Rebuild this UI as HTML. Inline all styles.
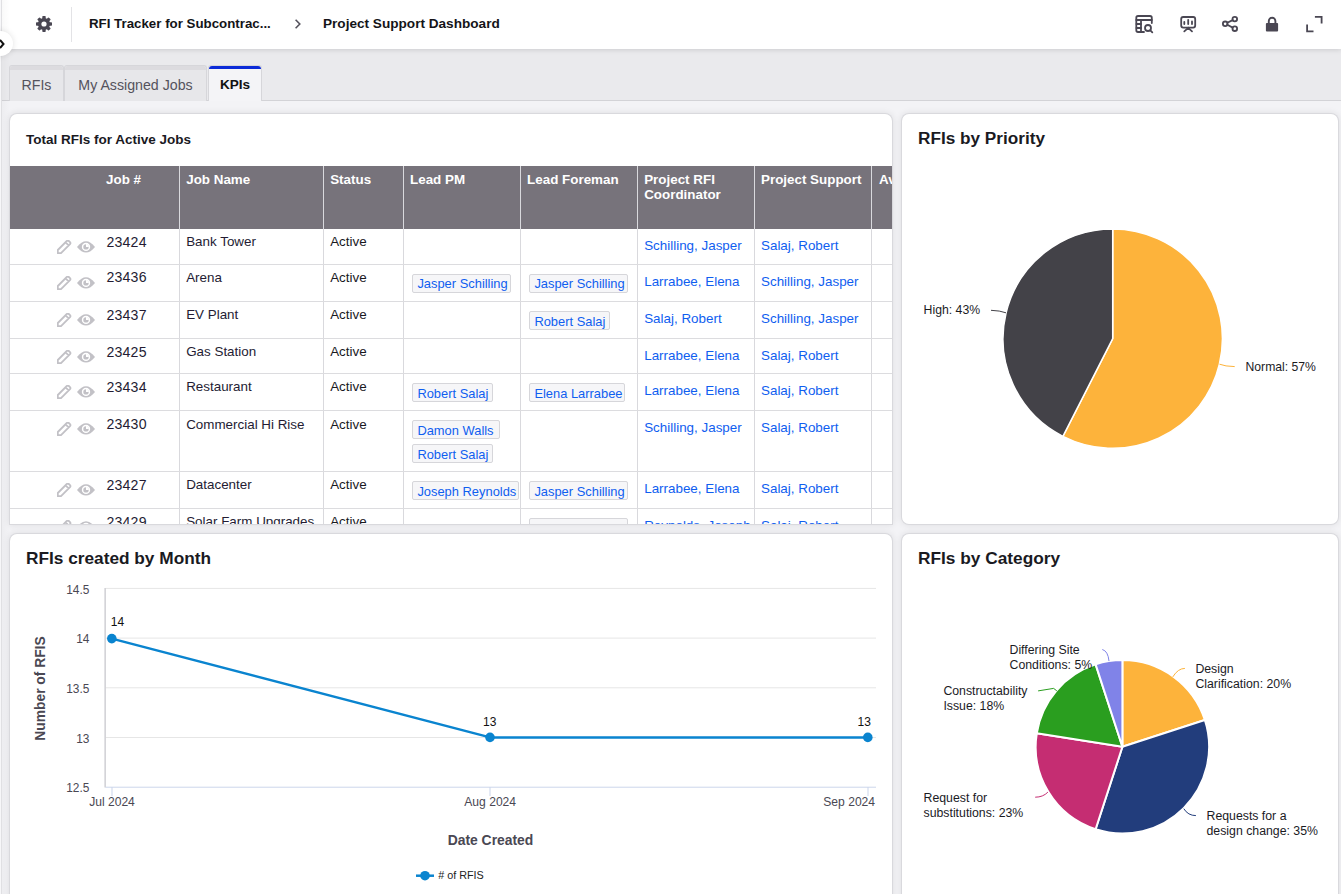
<!DOCTYPE html>
<html><head><meta charset="utf-8">
<style>
*{box-sizing:border-box;margin:0;padding:0}
html,body{width:1341px;height:894px;overflow:hidden;background:#e9e9ec;font-family:"Liberation Sans",sans-serif;position:relative}
.abs{position:absolute}
.t{position:absolute;white-space:nowrap}
#hdr{left:0;top:0;width:1341px;height:49px;background:#fff;box-shadow:0 1px 5px rgba(0,0,0,.13);z-index:5}
#leftline{left:0;top:0;width:10px;height:894px;z-index:6;background:linear-gradient(to right,#f7f7f9 0,#f7f7f9 1px,#e0e0e3 1px,#e0e0e3 2px,rgba(0,0,0,.025) 2px,rgba(0,0,0,0) 10px)}
.tabbar{left:0;top:49px;width:1341px;height:52px;background:#eaeaed;border-bottom:1px solid #d3d3d7}
.content{left:0;top:101px;width:1341px;height:793px;background:#f3f3f6}
.strip{display:none}
.tab{top:65px;height:36px;background:#e7e7ea;border:1px solid #d6d6da;border-bottom:none;border-radius:3px 3px 0 0;color:#55535d;font-size:14.2px;text-align:center;line-height:38px;z-index:2}
.tab:before{content:"";position:absolute;left:0;right:0;top:0;height:3.5px;background:#dcdbdf;border-radius:3px 3px 0 0}
.tab.sel{background:#f4f4f7;color:#111;height:36px;font-weight:bold;font-size:13.6px}
.tab.sel:before{background:#0b2ad8;height:3px}
.card{position:absolute;background:#fff;border-radius:7px;box-shadow:0 0 0 1px #d9d9dd,0 0 7px 1px rgba(0,0,0,.09);overflow:hidden}
.badge{position:absolute;height:19px;border:1px solid #d6d6da;background:#f6f6f8;border-radius:2px}
</style></head><body>
<div id="leftline" class="abs"></div>
<div id="hdr" class="abs">
<svg class="abs" style="left:0;top:0" width="1341" height="49" viewBox="0 0 1341 49">
<g transform="translate(44,24)" fill="#4a4753"><circle r="6.1"/><rect x="-1.7" y="-8" width="3.4" height="4" rx="0.7" transform="rotate(0)"/><rect x="-1.7" y="-8" width="3.4" height="4" rx="0.7" transform="rotate(45)"/><rect x="-1.7" y="-8" width="3.4" height="4" rx="0.7" transform="rotate(90)"/><rect x="-1.7" y="-8" width="3.4" height="4" rx="0.7" transform="rotate(135)"/><rect x="-1.7" y="-8" width="3.4" height="4" rx="0.7" transform="rotate(180)"/><rect x="-1.7" y="-8" width="3.4" height="4" rx="0.7" transform="rotate(225)"/><rect x="-1.7" y="-8" width="3.4" height="4" rx="0.7" transform="rotate(270)"/><rect x="-1.7" y="-8" width="3.4" height="4" rx="0.7" transform="rotate(315)"/><circle r="2.6" fill="#fff"/></g>
<rect x="71" y="7" width="1" height="35" fill="#e3e3e6"/>
<path d="M295.6,19.8 L299.8,24 L295.6,28.2" fill="none" stroke="#55535d" stroke-width="1.6"/>
<g fill="none" stroke="#4a4753" stroke-width="1.8" stroke-linecap="round" stroke-linejoin="round">
<!-- table search -->
<path d="M1144,32 H1138 Q1136.3,32 1136.3,30.3 V17.7 Q1136.3,16 1138,16 H1150 Q1151.8,16 1151.8,17.7 V23"/>
<path d="M1136.3,20 H1151.8"/>
<path d="M1141,20 V32"/>
<path d="M1136.5,24 H1141 M1136.5,28 H1141"/>
<circle cx="1148" cy="28" r="3"/>
<path d="M1150.3,30.3 L1152.3,32.3"/>
<!-- presentation -->
<rect x="1181.2" y="17" width="14" height="10.6" rx="2"/>
<path d="M1184.3,21.8 V24 M1188.2,19.8 V24 M1192,21.4 V24"/>
<path d="M1188.2,27.8 L1184.3,31.3 M1188.2,27.8 L1192,31.3"/>
<!-- share -->
<circle cx="1225.2" cy="23.8" r="2.3"/>
<circle cx="1234.8" cy="19.1" r="2.3"/>
<circle cx="1234.8" cy="28.7" r="2.3"/>
<path d="M1227.3,22.8 L1232.7,20.1 M1227.3,24.8 L1232.7,27.6"/>
<!-- expand -->
<path d="M1315.8,16.8 H1321.6 V22.6" stroke-linecap="square" stroke-linejoin="miter"/>
<path d="M1307.1,25.4 V31.3 H1312.6" stroke-linecap="square" stroke-linejoin="miter"/>
</g>
<!-- lock -->
<path d="M1268.8,23.5 V21 A3.3,3.3 0 0 1 1275.4,21 V23.5" fill="none" stroke="#4a4753" stroke-width="1.9"/>
<rect x="1265.9" y="23" width="12.2" height="8.6" rx="1" fill="#4a4753"/>
</svg>
<div class="abs" style="left:89px;top:16px;font-size:13.3px;font-weight:bold;color:#141418;white-space:nowrap">RFI Tracker for Subcontrac...</div>
<div class="abs" style="left:323px;top:16px;font-size:13.6px;font-weight:bold;color:#141418;white-space:nowrap">Project Support Dashboard</div>
</div>
<div class="abs" style="left:-12.5px;top:31px;width:25px;height:25px;border-radius:50%;background:#fff;box-shadow:0 0 6px rgba(0,0,0,.12);z-index:7"></div>
<svg class="abs" style="left:0;top:38px;z-index:8" width="8" height="12"><path d="M0,2 L3.5,6 L0,10" fill="none" stroke="#111" stroke-width="2"/></svg>
<div class="tabbar abs"></div>
<div class="content abs"></div>
<div class="strip abs"></div>
<div class="tab abs" style="left:9px;width:55px">RFIs</div>
<div class="tab abs" style="left:64px;width:143px">My Assigned Jobs</div>
<div class="tab abs sel" style="left:208px;width:54px">KPIs</div>
<div class="card" id="c1" style="left:10px;top:114px;width:882px;height:410px;border-radius:7px 7px 0 0">
<div class="t" style="left:16.00px;top:17.32px;font-size:13.5px;line-height:17px;font-weight:bold;color:#1a1a1f;">Total RFIs for Active Jobs</div>
<div class="abs" style="left:0;top:52px;width:882px;height:63.0px;background:#77737b"></div>
<div class="abs" style="left:169.1px;top:52px;width:1px;height:358px;background:#d9d9dd"></div>
<div class="abs" style="left:312.8px;top:52px;width:1px;height:358px;background:#d9d9dd"></div>
<div class="abs" style="left:393.1px;top:52px;width:1px;height:358px;background:#d9d9dd"></div>
<div class="abs" style="left:509.9px;top:52px;width:1px;height:358px;background:#d9d9dd"></div>
<div class="abs" style="left:626.9px;top:52px;width:1px;height:358px;background:#d9d9dd"></div>
<div class="abs" style="left:743.9px;top:52px;width:1px;height:358px;background:#d9d9dd"></div>
<div class="abs" style="left:861.1px;top:52px;width:1px;height:358px;background:#d9d9dd"></div>
<div class="abs" style="left:0;top:149.7px;width:882px;height:1px;background:#dcdcdf"></div>
<div class="abs" style="left:0;top:186.9px;width:882px;height:1px;background:#dcdcdf"></div>
<div class="abs" style="left:0;top:224.0px;width:882px;height:1px;background:#dcdcdf"></div>
<div class="abs" style="left:0;top:259.0px;width:882px;height:1px;background:#dcdcdf"></div>
<div class="abs" style="left:0;top:296.1px;width:882px;height:1px;background:#dcdcdf"></div>
<div class="abs" style="left:0;top:357.0px;width:882px;height:1px;background:#dcdcdf"></div>
<div class="abs" style="left:0;top:393.8px;width:882px;height:1px;background:#dcdcdf"></div>
<div class="t" style="left:96.00px;top:57.06px;font-size:13.4px;line-height:17px;font-weight:bold;color:#fff;">Job #</div>
<div class="t" style="left:176.20px;top:57.06px;font-size:13.4px;line-height:17px;font-weight:bold;color:#fff;">Job Name</div>
<div class="t" style="left:320.20px;top:57.06px;font-size:13.4px;line-height:17px;font-weight:bold;color:#fff;">Status</div>
<div class="t" style="left:400.00px;top:57.06px;font-size:13.4px;line-height:17px;font-weight:bold;color:#fff;">Lead PM</div>
<div class="t" style="left:517.10px;top:57.06px;font-size:13.4px;line-height:17px;font-weight:bold;color:#fff;">Lead Foreman</div>
<div class="t" style="left:634.20px;top:57.06px;font-size:13.4px;line-height:17px;font-weight:bold;color:#fff;">Project RFI</div>
<div class="t" style="left:751.00px;top:57.06px;font-size:13.4px;line-height:17px;font-weight:bold;color:#fff;">Project Support</div>
<div class="t" style="left:869.00px;top:57.06px;font-size:13.4px;line-height:17px;font-weight:bold;color:#fff;">Av</div>
<div class="t" style="left:634.20px;top:71.76px;font-size:13.4px;line-height:17px;font-weight:bold;color:#fff;">Coordinator</div>
<svg class="abs" style="left:47px;top:125.8px" width="15" height="15"><path d="M0.8,10 L9.8,1 Q10.8,0 11.8,1 L13,2.2 Q14,3.2 13,4.2 L4,13.2 L0.8,13.2 Z M8.6,2.4 L11.6,5.4" fill="none" stroke="#c2c1c6" stroke-width="1.8" stroke-linejoin="round"/></svg>
<svg class="abs" style="left:67px;top:127.0px" width="18" height="13"><path d="M0,5.9 Q9,-5.3 18,5.9 Q9,17.1 0,5.9Z" fill="#c2c1c6"/><circle cx="9" cy="5.9" r="4.2" fill="#fff"/><circle cx="9" cy="5.9" r="2.7" fill="#c2c1c6"/><path d="M9,5.9 L9,3.1 A2.8,2.8 0 0 1 11.8,5.9Z" fill="#fff"/></svg>
<div class="t" style="left:96.50px;top:118.71px;font-size:14.1px;line-height:18px;font-weight:normal;color:#241c33;;letter-spacing:0.2px">23424</div>
<div class="t" style="left:176.20px;top:119.46px;font-size:13.4px;line-height:17px;font-weight:normal;color:#241c33;">Bank Tower</div>
<div class="t" style="left:320.20px;top:119.46px;font-size:13.4px;line-height:17px;font-weight:normal;color:#1a1a1f;">Active</div>
<div class="t" style="left:634.20px;top:122.96px;font-size:13.4px;line-height:17px;font-weight:normal;color:#0f5ef0;">Schilling, Jasper</div>
<div class="t" style="left:751.00px;top:122.96px;font-size:13.4px;line-height:17px;font-weight:normal;color:#0f5ef0;">Salaj, Robert</div>
<svg class="abs" style="left:47px;top:161.5px" width="15" height="15"><path d="M0.8,10 L9.8,1 Q10.8,0 11.8,1 L13,2.2 Q14,3.2 13,4.2 L4,13.2 L0.8,13.2 Z M8.6,2.4 L11.6,5.4" fill="none" stroke="#c2c1c6" stroke-width="1.8" stroke-linejoin="round"/></svg>
<svg class="abs" style="left:67px;top:162.7px" width="18" height="13"><path d="M0,5.9 Q9,-5.3 18,5.9 Q9,17.1 0,5.9Z" fill="#c2c1c6"/><circle cx="9" cy="5.9" r="4.2" fill="#fff"/><circle cx="9" cy="5.9" r="2.7" fill="#c2c1c6"/><path d="M9,5.9 L9,3.1 A2.8,2.8 0 0 1 11.8,5.9Z" fill="#fff"/></svg>
<div class="t" style="left:96.50px;top:154.41px;font-size:14.1px;line-height:18px;font-weight:normal;color:#241c33;;letter-spacing:0.2px">23436</div>
<div class="t" style="left:176.20px;top:155.16px;font-size:13.4px;line-height:17px;font-weight:normal;color:#241c33;">Arena</div>
<div class="t" style="left:320.20px;top:155.16px;font-size:13.4px;line-height:17px;font-weight:normal;color:#1a1a1f;">Active</div>
<div class="badge" style="left:402.2px;top:159.6px;width:99px"></div>
<div class="t" style="left:407.40px;top:162.43px;font-size:12.9px;line-height:16px;font-weight:normal;color:#0f5ef0;">Jasper Schilling</div>
<div class="badge" style="left:519.2px;top:159.6px;width:99px"></div>
<div class="t" style="left:524.40px;top:162.43px;font-size:12.9px;line-height:16px;font-weight:normal;color:#0f5ef0;">Jasper Schilling</div>
<div class="t" style="left:634.20px;top:158.66px;font-size:13.4px;line-height:17px;font-weight:normal;color:#0f5ef0;">Larrabee, Elena</div>
<div class="t" style="left:751.00px;top:158.66px;font-size:13.4px;line-height:17px;font-weight:normal;color:#0f5ef0;">Schilling, Jasper</div>
<svg class="abs" style="left:47px;top:198.7px" width="15" height="15"><path d="M0.8,10 L9.8,1 Q10.8,0 11.8,1 L13,2.2 Q14,3.2 13,4.2 L4,13.2 L0.8,13.2 Z M8.6,2.4 L11.6,5.4" fill="none" stroke="#c2c1c6" stroke-width="1.8" stroke-linejoin="round"/></svg>
<svg class="abs" style="left:67px;top:199.9px" width="18" height="13"><path d="M0,5.9 Q9,-5.3 18,5.9 Q9,17.1 0,5.9Z" fill="#c2c1c6"/><circle cx="9" cy="5.9" r="4.2" fill="#fff"/><circle cx="9" cy="5.9" r="2.7" fill="#c2c1c6"/><path d="M9,5.9 L9,3.1 A2.8,2.8 0 0 1 11.8,5.9Z" fill="#fff"/></svg>
<div class="t" style="left:96.50px;top:191.61px;font-size:14.1px;line-height:18px;font-weight:normal;color:#241c33;;letter-spacing:0.2px">23437</div>
<div class="t" style="left:176.20px;top:192.36px;font-size:13.4px;line-height:17px;font-weight:normal;color:#241c33;">EV Plant</div>
<div class="t" style="left:320.20px;top:192.36px;font-size:13.4px;line-height:17px;font-weight:normal;color:#1a1a1f;">Active</div>
<div class="badge" style="left:519.2px;top:196.8px;width:80.5px"></div>
<div class="t" style="left:524.40px;top:199.63px;font-size:12.9px;line-height:16px;font-weight:normal;color:#0f5ef0;">Robert Salaj</div>
<div class="t" style="left:634.20px;top:195.86px;font-size:13.4px;line-height:17px;font-weight:normal;color:#0f5ef0;">Salaj, Robert</div>
<div class="t" style="left:751.00px;top:195.86px;font-size:13.4px;line-height:17px;font-weight:normal;color:#0f5ef0;">Schilling, Jasper</div>
<svg class="abs" style="left:47px;top:235.8px" width="15" height="15"><path d="M0.8,10 L9.8,1 Q10.8,0 11.8,1 L13,2.2 Q14,3.2 13,4.2 L4,13.2 L0.8,13.2 Z M8.6,2.4 L11.6,5.4" fill="none" stroke="#c2c1c6" stroke-width="1.8" stroke-linejoin="round"/></svg>
<svg class="abs" style="left:67px;top:237.0px" width="18" height="13"><path d="M0,5.9 Q9,-5.3 18,5.9 Q9,17.1 0,5.9Z" fill="#c2c1c6"/><circle cx="9" cy="5.9" r="4.2" fill="#fff"/><circle cx="9" cy="5.9" r="2.7" fill="#c2c1c6"/><path d="M9,5.9 L9,3.1 A2.8,2.8 0 0 1 11.8,5.9Z" fill="#fff"/></svg>
<div class="t" style="left:96.50px;top:228.71px;font-size:14.1px;line-height:18px;font-weight:normal;color:#241c33;;letter-spacing:0.2px">23425</div>
<div class="t" style="left:176.20px;top:229.46px;font-size:13.4px;line-height:17px;font-weight:normal;color:#241c33;">Gas Station</div>
<div class="t" style="left:320.20px;top:229.46px;font-size:13.4px;line-height:17px;font-weight:normal;color:#1a1a1f;">Active</div>
<div class="t" style="left:634.20px;top:232.96px;font-size:13.4px;line-height:17px;font-weight:normal;color:#0f5ef0;">Larrabee, Elena</div>
<div class="t" style="left:751.00px;top:232.96px;font-size:13.4px;line-height:17px;font-weight:normal;color:#0f5ef0;">Salaj, Robert</div>
<svg class="abs" style="left:47px;top:270.8px" width="15" height="15"><path d="M0.8,10 L9.8,1 Q10.8,0 11.8,1 L13,2.2 Q14,3.2 13,4.2 L4,13.2 L0.8,13.2 Z M8.6,2.4 L11.6,5.4" fill="none" stroke="#c2c1c6" stroke-width="1.8" stroke-linejoin="round"/></svg>
<svg class="abs" style="left:67px;top:272.0px" width="18" height="13"><path d="M0,5.9 Q9,-5.3 18,5.9 Q9,17.1 0,5.9Z" fill="#c2c1c6"/><circle cx="9" cy="5.9" r="4.2" fill="#fff"/><circle cx="9" cy="5.9" r="2.7" fill="#c2c1c6"/><path d="M9,5.9 L9,3.1 A2.8,2.8 0 0 1 11.8,5.9Z" fill="#fff"/></svg>
<div class="t" style="left:96.50px;top:263.71px;font-size:14.1px;line-height:18px;font-weight:normal;color:#241c33;;letter-spacing:0.2px">23434</div>
<div class="t" style="left:176.20px;top:264.46px;font-size:13.4px;line-height:17px;font-weight:normal;color:#241c33;">Restaurant</div>
<div class="t" style="left:320.20px;top:264.46px;font-size:13.4px;line-height:17px;font-weight:normal;color:#1a1a1f;">Active</div>
<div class="badge" style="left:402.2px;top:268.9px;width:80.5px"></div>
<div class="t" style="left:407.40px;top:271.73px;font-size:12.9px;line-height:16px;font-weight:normal;color:#0f5ef0;">Robert Salaj</div>
<div class="badge" style="left:519.2px;top:268.9px;width:96.2px"></div>
<div class="t" style="left:524.40px;top:271.73px;font-size:12.9px;line-height:16px;font-weight:normal;color:#0f5ef0;">Elena Larrabee</div>
<div class="t" style="left:634.20px;top:267.96px;font-size:13.4px;line-height:17px;font-weight:normal;color:#0f5ef0;">Larrabee, Elena</div>
<div class="t" style="left:751.00px;top:267.96px;font-size:13.4px;line-height:17px;font-weight:normal;color:#0f5ef0;">Salaj, Robert</div>
<svg class="abs" style="left:47px;top:307.9px" width="15" height="15"><path d="M0.8,10 L9.8,1 Q10.8,0 11.8,1 L13,2.2 Q14,3.2 13,4.2 L4,13.2 L0.8,13.2 Z M8.6,2.4 L11.6,5.4" fill="none" stroke="#c2c1c6" stroke-width="1.8" stroke-linejoin="round"/></svg>
<svg class="abs" style="left:67px;top:309.1px" width="18" height="13"><path d="M0,5.9 Q9,-5.3 18,5.9 Q9,17.1 0,5.9Z" fill="#c2c1c6"/><circle cx="9" cy="5.9" r="4.2" fill="#fff"/><circle cx="9" cy="5.9" r="2.7" fill="#c2c1c6"/><path d="M9,5.9 L9,3.1 A2.8,2.8 0 0 1 11.8,5.9Z" fill="#fff"/></svg>
<div class="t" style="left:96.50px;top:300.81px;font-size:14.1px;line-height:18px;font-weight:normal;color:#241c33;;letter-spacing:0.2px">23430</div>
<div class="t" style="left:176.20px;top:301.56px;font-size:13.4px;line-height:17px;font-weight:normal;color:#241c33;">Commercial Hi Rise</div>
<div class="t" style="left:320.20px;top:301.56px;font-size:13.4px;line-height:17px;font-weight:normal;color:#1a1a1f;">Active</div>
<div class="badge" style="left:402.2px;top:306.0px;width:87.4px"></div>
<div class="t" style="left:407.40px;top:308.83px;font-size:12.9px;line-height:16px;font-weight:normal;color:#0f5ef0;">Damon Walls</div>
<div class="badge" style="left:402.2px;top:330.2px;width:80.5px"></div>
<div class="t" style="left:407.40px;top:333.03px;font-size:12.9px;line-height:16px;font-weight:normal;color:#0f5ef0;">Robert Salaj</div>
<div class="t" style="left:634.20px;top:305.06px;font-size:13.4px;line-height:17px;font-weight:normal;color:#0f5ef0;">Schilling, Jasper</div>
<div class="t" style="left:751.00px;top:305.06px;font-size:13.4px;line-height:17px;font-weight:normal;color:#0f5ef0;">Salaj, Robert</div>
<svg class="abs" style="left:47px;top:368.8px" width="15" height="15"><path d="M0.8,10 L9.8,1 Q10.8,0 11.8,1 L13,2.2 Q14,3.2 13,4.2 L4,13.2 L0.8,13.2 Z M8.6,2.4 L11.6,5.4" fill="none" stroke="#c2c1c6" stroke-width="1.8" stroke-linejoin="round"/></svg>
<svg class="abs" style="left:67px;top:370.0px" width="18" height="13"><path d="M0,5.9 Q9,-5.3 18,5.9 Q9,17.1 0,5.9Z" fill="#c2c1c6"/><circle cx="9" cy="5.9" r="4.2" fill="#fff"/><circle cx="9" cy="5.9" r="2.7" fill="#c2c1c6"/><path d="M9,5.9 L9,3.1 A2.8,2.8 0 0 1 11.8,5.9Z" fill="#fff"/></svg>
<div class="t" style="left:96.50px;top:361.71px;font-size:14.1px;line-height:18px;font-weight:normal;color:#241c33;;letter-spacing:0.2px">23427</div>
<div class="t" style="left:176.20px;top:362.46px;font-size:13.4px;line-height:17px;font-weight:normal;color:#241c33;">Datacenter</div>
<div class="t" style="left:320.20px;top:362.46px;font-size:13.4px;line-height:17px;font-weight:normal;color:#1a1a1f;">Active</div>
<div class="badge" style="left:402.2px;top:366.9px;width:106.8px"></div>
<div class="t" style="left:407.40px;top:369.73px;font-size:12.9px;line-height:16px;font-weight:normal;color:#0f5ef0;">Joseph Reynolds</div>
<div class="badge" style="left:519.2px;top:366.9px;width:99px"></div>
<div class="t" style="left:524.40px;top:369.73px;font-size:12.9px;line-height:16px;font-weight:normal;color:#0f5ef0;">Jasper Schilling</div>
<div class="t" style="left:634.20px;top:365.96px;font-size:13.4px;line-height:17px;font-weight:normal;color:#0f5ef0;">Larrabee, Elena</div>
<div class="t" style="left:751.00px;top:365.96px;font-size:13.4px;line-height:17px;font-weight:normal;color:#0f5ef0;">Salaj, Robert</div>
<svg class="abs" style="left:47px;top:405.6px" width="15" height="15"><path d="M0.8,10 L9.8,1 Q10.8,0 11.8,1 L13,2.2 Q14,3.2 13,4.2 L4,13.2 L0.8,13.2 Z M8.6,2.4 L11.6,5.4" fill="none" stroke="#c2c1c6" stroke-width="1.8" stroke-linejoin="round"/></svg>
<svg class="abs" style="left:67px;top:406.8px" width="18" height="13"><path d="M0,5.9 Q9,-5.3 18,5.9 Q9,17.1 0,5.9Z" fill="#c2c1c6"/><circle cx="9" cy="5.9" r="4.2" fill="#fff"/><circle cx="9" cy="5.9" r="2.7" fill="#c2c1c6"/><path d="M9,5.9 L9,3.1 A2.8,2.8 0 0 1 11.8,5.9Z" fill="#fff"/></svg>
<div class="t" style="left:96.50px;top:398.51px;font-size:14.1px;line-height:18px;font-weight:normal;color:#241c33;;letter-spacing:0.2px">23429</div>
<div class="t" style="left:176.20px;top:399.26px;font-size:13.4px;line-height:17px;font-weight:normal;color:#241c33;">Solar Farm Upgrades</div>
<div class="t" style="left:320.20px;top:399.26px;font-size:13.4px;line-height:17px;font-weight:normal;color:#1a1a1f;">Active</div>
<div class="badge" style="left:519.2px;top:403.7px;width:99px"></div>
<div class="t" style="left:524.40px;top:406.53px;font-size:12.9px;line-height:16px;font-weight:normal;color:#0f5ef0;">Jasper Schilling</div>
<div class="t" style="left:634.20px;top:402.76px;font-size:13.4px;line-height:17px;font-weight:normal;color:#0f5ef0;">Reynolds, Joseph</div>
<div class="t" style="left:751.00px;top:402.76px;font-size:13.4px;line-height:17px;font-weight:normal;color:#0f5ef0;">Salaj, Robert</div>
</div>
<div class="card" id="c2" style="left:902px;top:114px;width:436px;height:410px;border-radius:7px">
<div class="t" style="left:16.00px;top:12.84px;font-size:17.2px;line-height:22px;font-weight:bold;color:#1a1a1f;">RFIs by Priority</div>
<svg class="abs" style="left:-902px;top:-114px" width="1341" height="894" viewBox="0 0 1341 894"><path d="M1112.70,338.60 L1112.70,228.90 A109.7,109.7 0 1 1 1062.90,436.34 Z" fill="#fdb33b" stroke="#fff" stroke-width="1.5" stroke-linejoin="round"/><path d="M1112.70,338.60 L1062.90,436.34 A109.7,109.7 0 0 1 1112.70,228.90 Z" fill="#434248" stroke="#fff" stroke-width="1.5" stroke-linejoin="round"/><path d="M1006,312.8 Q1000,310.6 991,310.3" fill="none" stroke="#434248" stroke-width="1"/><path d="M1219.5,364.2 Q1225,366.4 1234.7,366.6" fill="none" stroke="#fdb33b" stroke-width="1"/></svg>
<div class="t" style="left:21.60px;top:189.26px;font-size:12.25px;line-height:15px;font-weight:normal;color:#1b1b1f;">High: 43%</div>
<div class="t" style="left:343.50px;top:246.07px;font-size:12.2px;line-height:15px;font-weight:normal;color:#1b1b1f;">Normal: 57%</div>
</div>
<div class="card" id="c3" style="left:10px;top:534px;width:882px;height:380px;border-radius:7px">
<div class="t" style="left:16.00px;top:12.92px;font-size:17.25px;line-height:22px;font-weight:bold;color:#1a1a1f;">RFIs created by Month</div>
<svg class="abs" style="left:-10px;top:-534px" width="1341" height="894" viewBox="0 0 1341 894"><rect x="105.5" y="587.9" width="770.5" height="1" fill="#e6e6e6"/><rect x="105.5" y="637.6" width="770.5" height="1" fill="#e6e6e6"/><rect x="105.5" y="687.3" width="770.5" height="1" fill="#e6e6e6"/><rect x="105.5" y="737.0" width="770.5" height="1" fill="#e6e6e6"/><rect x="104.4" y="588" width="1.5" height="199.5" fill="#d0d0d4"/><rect x="105.5" y="786.7" width="770.5" height="1" fill="#ccd6eb"/><rect x="111.5" y="787" width="1" height="9" fill="#ccd6eb"/><rect x="489.5" y="787" width="1" height="9" fill="#ccd6eb"/><rect x="867.5" y="787" width="1" height="9" fill="#ccd6eb"/><path d="M111.8,638.6 L490,737.4 L867.8,737.4" fill="none" stroke="#0a84cf" stroke-width="2.5" stroke-linejoin="round"/><circle cx="111.8" cy="638.6" r="4.8" fill="#0a84cf"/><circle cx="490" cy="737.4" r="4.8" fill="#0a84cf"/><circle cx="867.8" cy="737.4" r="4.8" fill="#0a84cf"/><path d="M416,875.7 H434" stroke="#0a84cf" stroke-width="2.5"/><circle cx="425" cy="875.7" r="4.8" fill="#0a84cf"/></svg>
<div class="t" style="left:30px;width:49.4px;text-align:right;top:48.65px;font-size:11.9px;line-height:15px;color:#4a4853">14.5</div>
<div class="t" style="left:30px;width:49.4px;text-align:right;top:98.35px;font-size:11.9px;line-height:15px;color:#4a4853">14</div>
<div class="t" style="left:30px;width:49.4px;text-align:right;top:148.05px;font-size:11.9px;line-height:15px;color:#4a4853">13.5</div>
<div class="t" style="left:30px;width:49.4px;text-align:right;top:197.75px;font-size:11.9px;line-height:15px;color:#4a4853">13</div>
<div class="t" style="left:30px;width:49.4px;text-align:right;top:247.45px;font-size:11.9px;line-height:15px;color:#4a4853">12.5</div>
<div class="t" style="left:42px;width:120px;text-align:center;top:261.10px;font-size:12.1px;line-height:15px;color:#4a4853">Jul 2024</div>
<div class="t" style="left:420.2px;width:120px;text-align:center;top:261.10px;font-size:12.1px;line-height:15px;color:#4a4853">Aug 2024</div>
<div class="t" style="left:779.2px;width:120px;text-align:center;top:261.10px;font-size:12.1px;line-height:15px;color:#4a4853">Sep 2024</div>
<div class="t" style="left:100.80px;top:81.34px;font-size:12px;line-height:15px;font-weight:normal;color:#111;">14</div>
<div class="t" style="left:473.00px;top:180.64px;font-size:12px;line-height:15px;font-weight:normal;color:#111;">13</div>
<div class="t" style="left:847.50px;top:180.64px;font-size:12px;line-height:15px;font-weight:normal;color:#111;">13</div>
<div class="t" style="left:400.5px;width:160px;text-align:center;top:298.40px;font-size:13.9px;line-height:17px;font-weight:bold;color:#4a4853">Date Created</div>
<div class="t" style="left:-50.5px;width:160px;text-align:center;top:145.50px;font-size:13.8px;line-height:17px;font-weight:bold;color:#4a4853;transform:rotate(-90deg)">Number of RFIS</div>
<div class="t" style="left:428.20px;top:334.06px;font-size:10.8px;line-height:14px;font-weight:normal;color:#222;"># of RFIS</div>
</div>
<div class="card" id="c4" style="left:902px;top:534px;width:436px;height:380px;border-radius:7px">
<div class="t" style="left:16.00px;top:12.91px;font-size:17.3px;line-height:22px;font-weight:bold;color:#1a1a1f;">RFIs by Category</div>
<svg class="abs" style="left:-902px;top:-534px" width="1341" height="894" viewBox="0 0 1341 894"><path d="M1122.40,746.80 L1122.40,660.10 A86.7,86.7 0 0 1 1204.86,720.01 Z" fill="#fdb33b" stroke="#fff" stroke-width="2" stroke-linejoin="round"/><path d="M1122.40,746.80 L1204.86,720.01 A86.7,86.7 0 0 1 1095.61,829.26 Z" fill="#223d7c" stroke="#fff" stroke-width="2" stroke-linejoin="round"/><path d="M1122.40,746.80 L1095.61,829.26 A86.7,86.7 0 0 1 1036.77,733.24 Z" fill="#c52d72" stroke="#fff" stroke-width="2" stroke-linejoin="round"/><path d="M1122.40,746.80 L1036.77,733.24 A86.7,86.7 0 0 1 1095.61,664.34 Z" fill="#2a9e1f" stroke="#fff" stroke-width="2" stroke-linejoin="round"/><path d="M1122.40,746.80 L1095.61,664.34 A86.7,86.7 0 0 1 1122.40,660.10 Z" fill="#8083e8" stroke="#fff" stroke-width="2" stroke-linejoin="round"/><path d="M1172.8,676.9 Q1178,668.4 1184.9,668.4" fill="none" stroke="#fdb33b" stroke-width="1"/><path d="M1183.8,808.7 Q1188,815.6 1195.9,815.6" fill="none" stroke="#223d7c" stroke-width="1"/><path d="M1047.9,792.1 Q1043,797.2 1035.2,797.2" fill="none" stroke="#c52d72" stroke-width="1"/><path d="M1056.8,690.8 L1053.6,688.4 L1038.1,690.9" fill="none" stroke="#2a9e1f" stroke-width="1"/><path d="M1109,661.1 Q1108,651 1102.3,649.5" fill="none" stroke="#8083e8" stroke-width="1"/></svg>
<div class="t" style="left:293.40px;top:128.04px;font-size:12.3px;line-height:15px;font-weight:normal;color:#1b1b1f;">Design</div>
<div class="t" style="left:293.40px;top:143.04px;font-size:12.3px;line-height:15px;font-weight:normal;color:#1b1b1f;">Clarification: 20%</div>
<div class="t" style="left:304.50px;top:275.14px;font-size:12.3px;line-height:15px;font-weight:normal;color:#1b1b1f;">Requests for a</div>
<div class="t" style="left:304.50px;top:290.14px;font-size:12.3px;line-height:15px;font-weight:normal;color:#1b1b1f;">design change: 35%</div>
<div class="t" style="left:21.50px;top:256.94px;font-size:12.3px;line-height:15px;font-weight:normal;color:#1b1b1f;">Request for</div>
<div class="t" style="left:21.50px;top:271.94px;font-size:12.3px;line-height:15px;font-weight:normal;color:#1b1b1f;">substitutions: 23%</div>
<div class="t" style="left:41.40px;top:149.94px;font-size:12.3px;line-height:15px;font-weight:normal;color:#1b1b1f;">Constructability</div>
<div class="t" style="left:41.40px;top:164.94px;font-size:12.3px;line-height:15px;font-weight:normal;color:#1b1b1f;">Issue: 18%</div>
<div class="t" style="left:107.50px;top:109.34px;font-size:12.3px;line-height:15px;font-weight:normal;color:#1b1b1f;">Differing Site</div>
<div class="t" style="left:107.50px;top:124.34px;font-size:12.3px;line-height:15px;font-weight:normal;color:#1b1b1f;">Conditions: 5%</div>
</div>
</body></html>
